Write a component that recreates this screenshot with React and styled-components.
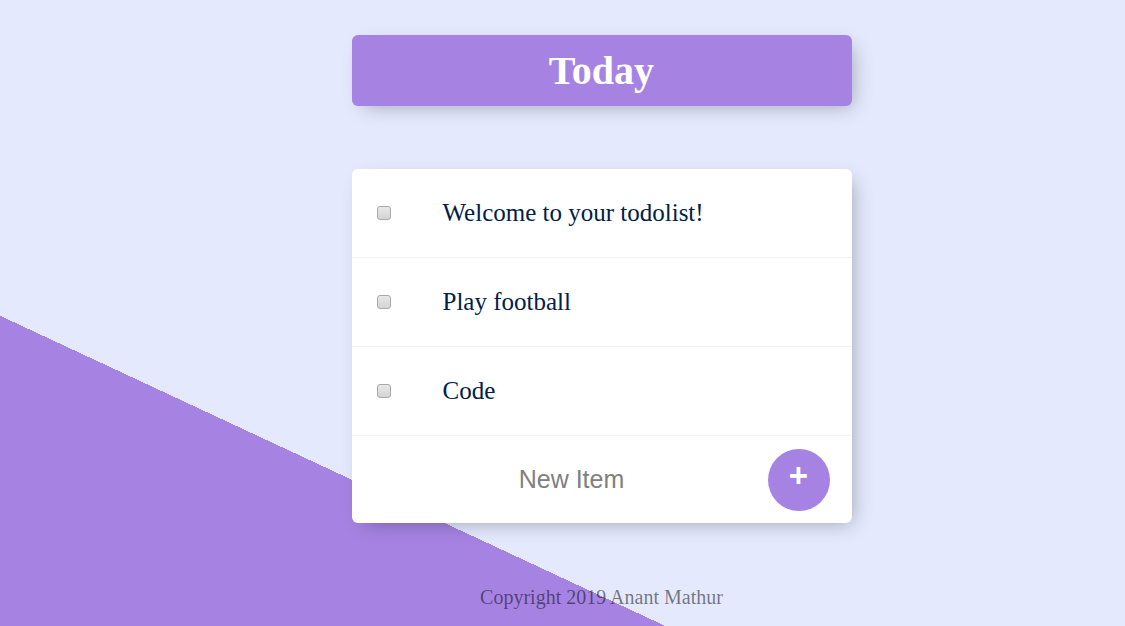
import React from 'react'
import styled, { createGlobalStyle } from 'styled-components'

const purple = '#A683E3'
const lavender = '#E4E9FD'

const GlobalStyle = createGlobalStyle`
    html, body {
        margin: 0;
        padding: 0;
        background: ${lavender};
    }
    body {
        font-family: "Liberation Serif", "Times New Roman", serif;
    }
`

const Page = styled.div`
    min-height: 626px;
    overflow: hidden;
    background-color: ${lavender};
    background-image: linear-gradient(25deg, ${purple} 50%, ${lavender} 50%);
    background-size: 1125px 1156px;
    background-repeat: no-repeat;
    padding: 35px 0 0 78px;
    box-sizing: border-box;
`

const Box = styled.div`
    width: 500px;
    margin: 0 auto;
    background: white;
    border-radius: 6px;
    box-shadow: 6px 6px 19px -6px rgba(0, 0, 0, 0.3);
    ${props => props.mt && `margin-top: ${props.mt};`}
`

const Heading = styled(Box)`
    background: ${purple};
    text-align: center;
`

const Title = styled.h1`
    margin: 0;
    height: 71px;
    line-height: 71px;
    font-size: 40px;
    font-weight: bold;
    color: #fff;
`

const Item = styled.div`
    min-height: 88px;
    display: flex;
    align-items: center;
    border-bottom: 1px solid #F1F1F1;
`

const Check = styled.input.attrs({ type: 'checkbox' })`
    appearance: none;
    margin: 0 25px;
    width: 14px;
    height: 14px;
    box-sizing: border-box;
    border: 1px solid #a9a9a9;
    border-radius: 3px;
    background: linear-gradient(#e8e8e8, #d4d4d4);
`

const Text = styled.p`
    margin: 0;
    padding: 0 25px 0 27px;
    font-size: 25px;
    color: #00204a;
`

const Form = styled.form`
    height: 87px;
    display: flex;
    align-items: center;
    padding: 0 22px 0 50px;
    gap: 26px;
`

const NewItem = styled.input.attrs({ type: 'text' })`
    flex: 1;
    min-width: 0;
    height: 60px;
    border: none;
    padding: 0;
    text-align: center;
    font-family: "Liberation Sans", Arial, sans-serif;
    font-size: 25px;
    outline: none;
    &::placeholder {
        color: grey;
        opacity: 1;
    }
`

const AddButton = styled.button`
    width: 62px;
    height: 62px;
    border-radius: 50%;
    border: 0;
    background: ${purple};
    color: #fff;
    font-family: "Liberation Sans", Arial, sans-serif;
    font-size: 33px;
    font-weight: bold;
    line-height: 1;
    padding: 0 0 9px;
    display: flex;
    align-items: center;
    justify-content: center;
`

const Footer = styled.footer`
    margin-top: 63px;
    text-align: center;
    font-size: 20px;
    color: rgba(0, 0, 0, 0.5);
`

const items = ['Welcome to your todolist!', 'Play football', 'Code']

export default function App() {
    return (
        <Page>
            <GlobalStyle />
            <Heading>
                <Title>Today</Title>
            </Heading>
            <Box mt="63px">
                {items.map(item => (
                    <Item key={item}>
                        <Check />
                        <Text>{item}</Text>
                    </Item>
                ))}
                <Form onSubmit={e => e.preventDefault()}>
                    <NewItem placeholder="New Item" autoComplete="off" />
                    <AddButton type="submit">+</AddButton>
                </Form>
            </Box>
            <Footer>Copyright 2019 Anant Mathur</Footer>
        </Page>
    )
}
